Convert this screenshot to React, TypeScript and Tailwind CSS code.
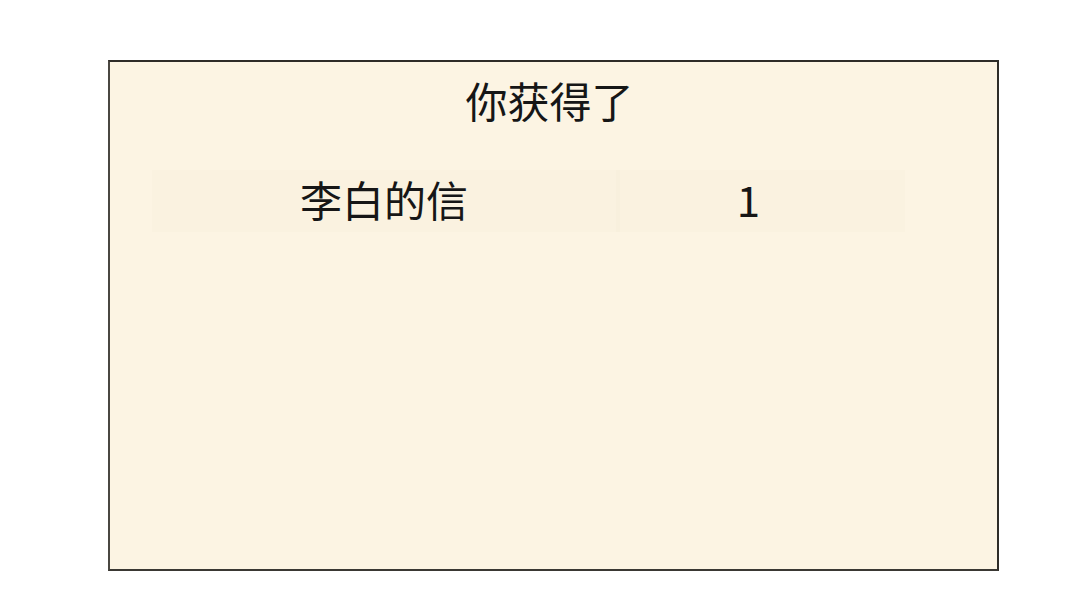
export default function App() {
  const items = [{ name: "李白的信", count: 1 }];
  return (
    <div className="w-[1080px] h-[606px] bg-white pt-[60px] pl-[108px]" style={{ fontFamily: '"Noto Sans CJK SC", "Noto Sans", sans-serif' }}>
      <div className="w-[891px] h-[511px] bg-[#fcf4e3] border-2 border-[#2e2c28] border-l-[#4a4741] border-b-[#3a3833] flex flex-col">
        <div className="h-[84px] flex items-center justify-center">
          <span className="text-[42px] leading-none text-[#161616] mr-[8px] mt-[-9px]">你获得了</span>
        </div>
        <div className="mt-[24px] ml-[42px] w-[753px] flex flex-col">
          {items.map((it) => (
            <div key={it.name} className="h-[62px] flex bg-[#faf2e0]">
              <div className="w-[464px] flex items-center justify-center text-[42px] leading-none text-[#161616] pb-[5px]">
                {it.name}
              </div>
              <div className="w-[4px] bg-[#f8f0dd]" />
              <div className="flex-1 flex items-center justify-center text-[42px] leading-none text-[#161616] pr-[28px] pb-[4px]">
                {it.count}
              </div>
            </div>
          ))}
        </div>
      </div>
    </div>
  );
}
